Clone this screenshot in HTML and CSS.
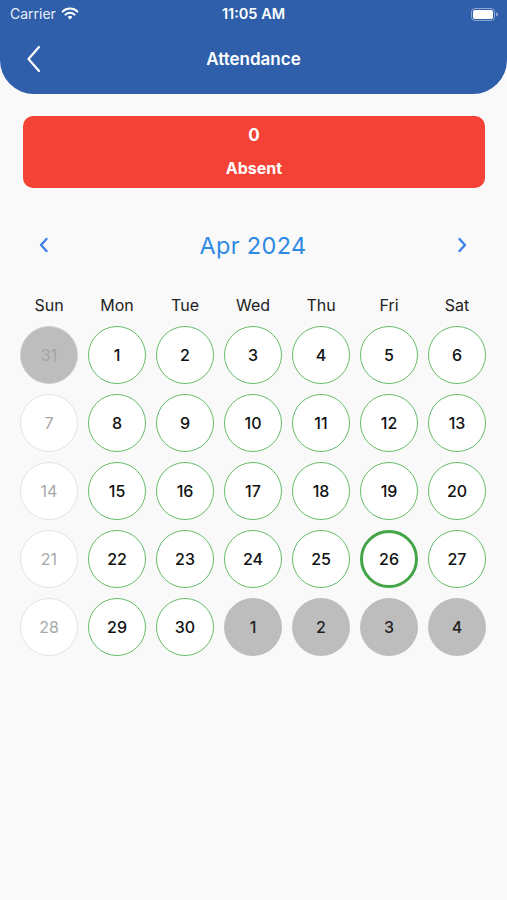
FILE: index.html
```html
<!DOCTYPE html>
<html lang="en">
<head>
	<meta charset="UTF-8">
	<title>Attendance</title>
	<link rel="stylesheet" href="styles.css">
</head>
<body>
<header class="topbar">
	<div class="status">
		<span class="carrier">Carrier
			<svg class="wifi" width="18" height="13" viewBox="0 0 18 13">
				<path d="M9 12.5 L6.6 9.9 A3.4 3.4 0 0 1 11.4 9.9 Z" fill="#fff"/>
				<path d="M4.4 7.6 A6.6 6.6 0 0 1 13.6 7.6" stroke="#fff" stroke-width="2" fill="none" stroke-linecap="round"/>
				<path d="M1.6 4.6 A10.6 10.6 0 0 1 16.4 4.6" stroke="#fff" stroke-width="2" fill="none" stroke-linecap="round"/>
			</svg>
		</span>
		<span class="clock">11:05 AM</span>
		<span class="battery">
			<svg width="27" height="13" viewBox="0 0 27 13">
				<rect x="0.5" y="0.5" width="23" height="12" rx="3.5" fill="none" stroke="rgba(255,255,255,0.45)"/>
				<rect x="2" y="2" width="20" height="9" rx="2" fill="#fff"/>
				<path d="M25 4.5 A2 2 0 0 1 25 8.5 Z" fill="rgba(255,255,255,0.45)"/>
			</svg>
		</span>
	</div>
	<nav class="navbar">
		<svg class="back" width="16" height="28" viewBox="0 0 16 28">
			<path d="M13 2 L2.5 14 L13 26" stroke="#fff" stroke-width="2.2" fill="none" stroke-linecap="round" stroke-linejoin="round"/>
		</svg>
		<h1>Attendance</h1>
	</nav>
</header>

<main>
	<div class="summary">
		<span class="count">0</span>
		<span class="label">Absent</span>
	</div>

	<div class="month">
		<svg width="10" height="16" viewBox="0 0 10 16"><path d="M7.5 2 L2 8 L7.5 14" stroke="#3d82e6" stroke-width="2.4" fill="none" stroke-linecap="round" stroke-linejoin="round"/></svg>
		<span class="title">Apr 2024</span>
		<svg width="10" height="16" viewBox="0 0 10 16"><path d="M2.5 2 L8 8 L2.5 14" stroke="#3d82e6" stroke-width="2.4" fill="none" stroke-linecap="round" stroke-linejoin="round"/></svg>
	</div>

	<div class="calendar">
		<div class="wd">Sun</div><div class="wd">Mon</div><div class="wd">Tue</div><div class="wd">Wed</div><div class="wd">Thu</div><div class="wd">Fri</div><div class="wd">Sat</div>

		<div class="day other"><span>31</span></div>
		<div class="day present"><span>1</span></div>
		<div class="day present"><span>2</span></div>
		<div class="day present"><span>3</span></div>
		<div class="day present"><span>4</span></div>
		<div class="day present"><span>5</span></div>
		<div class="day present"><span>6</span></div>

		<div class="day off"><span>7</span></div>
		<div class="day present"><span>8</span></div>
		<div class="day present"><span>9</span></div>
		<div class="day present"><span>10</span></div>
		<div class="day present"><span>11</span></div>
		<div class="day present"><span>12</span></div>
		<div class="day present"><span>13</span></div>

		<div class="day off"><span>14</span></div>
		<div class="day present"><span>15</span></div>
		<div class="day present"><span>16</span></div>
		<div class="day present"><span>17</span></div>
		<div class="day present"><span>18</span></div>
		<div class="day present"><span>19</span></div>
		<div class="day present"><span>20</span></div>

		<div class="day off"><span>21</span></div>
		<div class="day present"><span>22</span></div>
		<div class="day present"><span>23</span></div>
		<div class="day present"><span>24</span></div>
		<div class="day present"><span>25</span></div>
		<div class="day present today"><span>26</span></div>
		<div class="day present"><span>27</span></div>

		<div class="day off"><span>28</span></div>
		<div class="day present"><span>29</span></div>
		<div class="day present"><span>30</span></div>
		<div class="day next"><span>1</span></div>
		<div class="day next"><span>2</span></div>
		<div class="day next"><span>3</span></div>
		<div class="day next"><span>4</span></div>
	</div>
</main>
</body>
</html>
```

FILE: styles.css
```css
body{
	margin: 0;
	background: #f9f9f9;
	font-family: Inter, "Noto Sans", sans-serif;
	color: #1a1a1a;
}

/* blue header with status bar */
.topbar{
	background: #2f5faa;
	height: 94px;
	border-radius: 0 0 34px 34px;
	color: #fff;
}
.status{
	height: 27px;
	display: flex;
	align-items: center;
	justify-content: space-between;
	padding: 0 9px 0 10px;
	position: relative;
	font-size: 14px;
}
.carrier{
	display: flex;
	align-items: center;
	gap: 5px;
	color: #e8eef8;
}
.clock{
	position: absolute;
	left: 0;
	right: 0;
	text-align: center;
	font-weight: 600;
	font-size: 14.5px;
}
.battery{
	display: flex;
	padding-top: 1px;
}
.navbar{
	height: 64px;
	display: flex;
	align-items: center;
	padding-left: 26px;
	position: relative;
}
.navbar h1{
	position: absolute;
	left: 0;
	right: 0;
	margin: 0;
	text-align: center;
	font-size: 17px;
	font-weight: 600;
}

main{
	padding: 22px 22px 0 23px;
}
.summary{
	height: 72px;
	background: #f44336;
	border-radius: 10px;
	color: #fff;
	font-weight: 700;
	display: flex;
	flex-direction: column;
	align-items: center;
	font-size: 16px;
}
.count{
	margin-top: 9px;
	line-height: 20px;
	font-size: 17px;
}
.label{
	margin-top: 13px;
	line-height: 20px;
}

.month{
	height: 40px;
	margin-top: 37px;
	display: flex;
	align-items: center;
	justify-content: space-between;
	padding: 0 18px 0 16px;
}
.month .title{
	font-size: 23.5px;
	color: #2f8ae3;
	letter-spacing: 0.3px;
}

.calendar{
	margin: 24px 0 0 -8px;
	display: grid;
	grid-template-columns: repeat(7, 68px);
	grid-template-rows: 32px;
	grid-auto-rows: 68px;
}
.calendar .wd{
	line-height: 32px;
	text-align: center;
	font-size: 16px;
	color: #222;
}
.day{
	display: flex;
	align-items: center;
	justify-content: center;
}
.day span{
	width: 58px;
	height: 58px;
	box-sizing: border-box;
	border-radius: 50%;
	display: flex;
	align-items: center;
	justify-content: center;
	font-size: 16px;
	font-weight: 500;
}
.present span{
	background: #fff;
	border: 1.8px solid #66bb6a;
	color: #111;
}
.today span{
	border: 3px solid #43a547;
}
.off span{
	background: #fff;
	border: 1.5px solid #e4e4e4;
	color: #a8a8a8;
	font-weight: 400;
}
.other span{
	background: #bdbdbd;
	border: 1.5px solid #d0d0d0;
	color: #a5a5a5;
	font-weight: 400;
}
.next span{
	background: #bdbdbd;
	color: #222;
}
```
